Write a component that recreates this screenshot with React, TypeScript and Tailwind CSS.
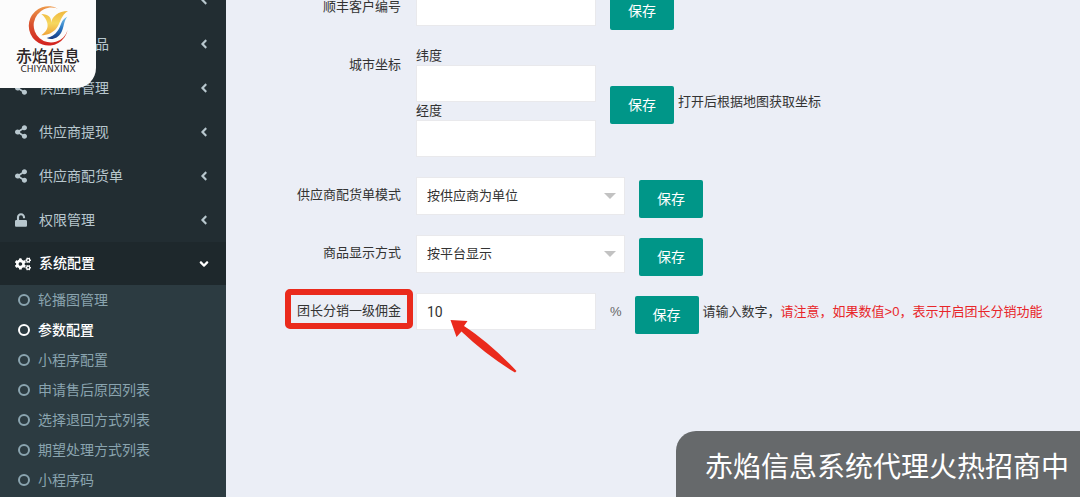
import type { ReactNode } from 'react';
import type { IconType } from 'react-icons';
import { FaAngleDown, FaAngleLeft, FaCogs, FaShareAlt, FaUnlock } from 'react-icons/fa';

type MenuEntry = { label: string; icon: IconType };

const menu: MenuEntry[] = [
  { label: '供应商商品', icon: FaShareAlt },
  { label: '供应商管理', icon: FaShareAlt },
  { label: '供应商提现', icon: FaShareAlt },
  { label: '供应商配货单', icon: FaShareAlt },
  { label: '权限管理', icon: FaUnlock },
];

const submenu = [
  '轮播图管理',
  '参数配置',
  '小程序配置',
  '申请售后原因列表',
  '选择退回方式列表',
  '期望处理方式列表',
  '小程序码',
];

function Logo() {
  return (
    <div className="absolute left-0 top-0 flex h-[88px] w-[96px] flex-col items-center rounded-br-[20px] bg-[#fcfcfc] pt-1">
      <svg viewBox="72 12 132 132" className="h-[44px] w-[44px]" aria-hidden="true">
        <defs>
          <linearGradient id="ring" x1="0" y1="0" x2="0" y2="1">
            <stop offset="0" stopColor="#ee9a4a" />
            <stop offset="0.45" stopColor="#d9532f" />
            <stop offset="1" stopColor="#d3221f" />
          </linearGradient>
          <linearGradient id="wing" x1="0" y1="0" x2="0" y2="1">
            <stop offset="0" stopColor="#f0b73c" />
            <stop offset="0.5" stopColor="#f6d860" />
            <stop offset="1" stopColor="#f0a238" />
          </linearGradient>
          <linearGradient id="tail" x1="0" y1="0" x2="0" y2="1">
            <stop offset="0" stopColor="#7cc4ea" />
            <stop offset="0.5" stopColor="#2a78c4" />
            <stop offset="1" stopColor="#173a83" />
          </linearGradient>
        </defs>
        <path d="M168 26A59 59 0 1 0 197 90A52 52 0 1 1 126 28C140 21 154 21 168 26Z" fill="url(#ring)" />
        <path
          d="M118 42C140 42 149 54 147 68C152 48 168 34 198 33C176 46 176 68 164 84C154 98 136 106 118 106C134 94 139 84 136 70C133 58 128 50 118 42Z"
          fill="url(#wing)"
        />
        <path
          d="M196 50C176 58 178 78 167 92C159 104 148 110 134 114C150 122 168 114 177 99C187 82 184 64 196 50Z"
          fill="url(#tail)"
        />
      </svg>
      <span className="text-[16px] font-medium leading-[18px] text-[#2b2526]">赤焰信息</span>
      <span className="font-['DejaVu_Sans',sans-serif] text-[9px] leading-[6px] text-[#2b2526]">CHIYANXINX</span>
    </div>
  );
}

function Sidebar() {
  return (
    <nav className="w-[226px] shrink-0 bg-[#222d32] text-[14px]">
      <ul>
        <li className="-mt-[22px]">
          <a href="#" aria-label="展开" className="flex h-11 items-center justify-end pr-4 text-[#b8c7ce]">
            <FaAngleLeft className="h-[14px] w-3" />
          </a>
        </li>
        {menu.map(({ label, icon: Icon }) => (
          <li key={label}>
            <a href="#" className="flex h-11 items-center pl-[15px] pr-4 text-[#b8c7ce]">
              <Icon className="mr-3 h-[14px] w-3" />
              <span className="flex-1">{label}</span>
              <FaAngleLeft className="h-[14px] w-3" />
            </a>
          </li>
        ))}
        <li>
          <a href="#" className="flex h-[43px] items-center bg-[#1e282c] pl-[15px] pr-4 font-medium text-white">
            <FaCogs className="mr-2 h-4 w-4" />
            <span className="flex-1">系统配置</span>
            <FaAngleDown className="h-[14px] w-3" />
          </a>
          <ul className="bg-[#2c3b41] pb-4">
            {submenu.map((label) => (
              <li key={label}>
                <a
                  href="#"
                  className={
                    label === '参数配置'
                      ? 'flex h-[30px] items-center gap-2 pl-[18px] font-medium text-white'
                      : 'flex h-[30px] items-center gap-2 pl-[18px] text-[#8aa4af]'
                  }
                >
                  <span className="h-3 w-3 rounded-full border-2 border-current" />
                  {label}
                </a>
              </li>
            ))}
          </ul>
        </li>
      </ul>
    </nav>
  );
}

function FormRow({ label, id, marked, children }: { label: string; id: string; marked?: boolean; children: ReactNode }) {
  return (
    <div className="mb-[17px] flex items-start">
      <div className="mr-[15px] flex w-[175px] shrink-0 justify-end">
        <label htmlFor={id} className="relative leading-9">
          {label}
          {marked && (
            <span className="absolute -inset-x-3 -top-1 h-10 rounded-[5px] border-[6px] border-[#ea2a1c]" />
          )}
        </label>
      </div>
      {children}
    </div>
  );
}

function SaveButton() {
  return (
    <button type="button" className="mt-[3px] h-[38px] w-16 shrink-0 rounded-[2px] bg-[#009688] text-[14px] text-white">
      保存
    </button>
  );
}

function TextBox({ id, value }: { id: string; value?: string }) {
  return (
    <input
      id={id}
      type="text"
      defaultValue={value}
      className="block h-[37px] w-[180px] border border-[#e9e9ec] bg-white px-[10px] font-[Roboto,sans-serif] text-[14px] outline-none"
    />
  );
}

function SelectBox({ id, value }: { id: string; value: string }) {
  return (
    <div className="relative mr-[14px] w-[209px]">
      <select
        id={id}
        className="block h-[38px] w-full appearance-none border border-[#e9e9ec] bg-white px-[10px] text-[13px] outline-none"
      >
        <option>{value}</option>
      </select>
      <svg viewBox="0 0 12 6" className="pointer-events-none absolute right-[9px] top-4 h-[6px] w-3" aria-hidden="true">
        <path d="M0 0H12L6 6Z" fill="#c2c2c2" />
      </svg>
    </div>
  );
}

export default function App() {
  return (
    <div className="relative flex h-screen overflow-hidden bg-[#ebeef6] font-['Liberation_Sans','Noto_Sans_CJK_SC',sans-serif]">
      <Sidebar />
      <main className="min-w-0 flex-1 whitespace-nowrap text-[13px] text-[#333]">
        <form className="-mt-[11px]">
          <FormRow label="顺丰客户编号" id="customer">
            <div className="mr-[14px]">
              <TextBox id="customer" />
            </div>
            <SaveButton />
          </FormRow>
          <FormRow label="城市坐标" id="lat">
            <div className="mr-[14px] pb-[3px]">
              <label htmlFor="lat" className="block leading-[18px]">纬度</label>
              <TextBox id="lat" />
              <label htmlFor="lng" className="block leading-[18px]">经度</label>
              <TextBox id="lng" />
            </div>
            <div className="flex gap-1 self-center">
              <SaveButton />
              <span className="leading-[38px]">打开后根据地图获取坐标</span>
            </div>
          </FormRow>
          <FormRow label="供应商配货单模式" id="mode">
            <SelectBox id="mode" value="按供应商为单位" />
            <SaveButton />
          </FormRow>
          <FormRow label="商品显示方式" id="display">
            <SelectBox id="display" value="按平台显示" />
            <SaveButton />
          </FormRow>
          <FormRow label="团长分销一级佣金" id="rate" marked>
            <div className="relative mr-[14px]">
              <TextBox id="rate" value="10" />
              <svg
                viewBox="0 0 67 54"
                className="pointer-events-none absolute left-[34px] top-[26px] h-[54px] w-[67px]"
                aria-hidden="true"
              >
                <path d="M0.5 1L17.5 2L14 7Q40 24 66.5 52L65 53.5Q36 36 11.5 12.5L6.5 18Z" fill="#ea2a1c" />
              </svg>
            </div>
            <span className="mr-[13px] leading-[38px] text-[#666]">%</span>
            <SaveButton />
            <p className="ml-1 leading-[38px]">
              请输入数字，<span className="text-[#e8262a]">请注意，如果数值&gt;0，表示开启团长分销功能</span>
            </p>
          </FormRow>
        </form>
      </main>
      <Logo />
      <div className="absolute bottom-0 right-0 rounded-tl-[20px] bg-[#66696b] pb-2 pl-[29px] pr-[11px] pt-4 text-[28px] leading-[42px] text-white">
        赤焰信息系统代理火热招商中
      </div>
    </div>
  );
}
